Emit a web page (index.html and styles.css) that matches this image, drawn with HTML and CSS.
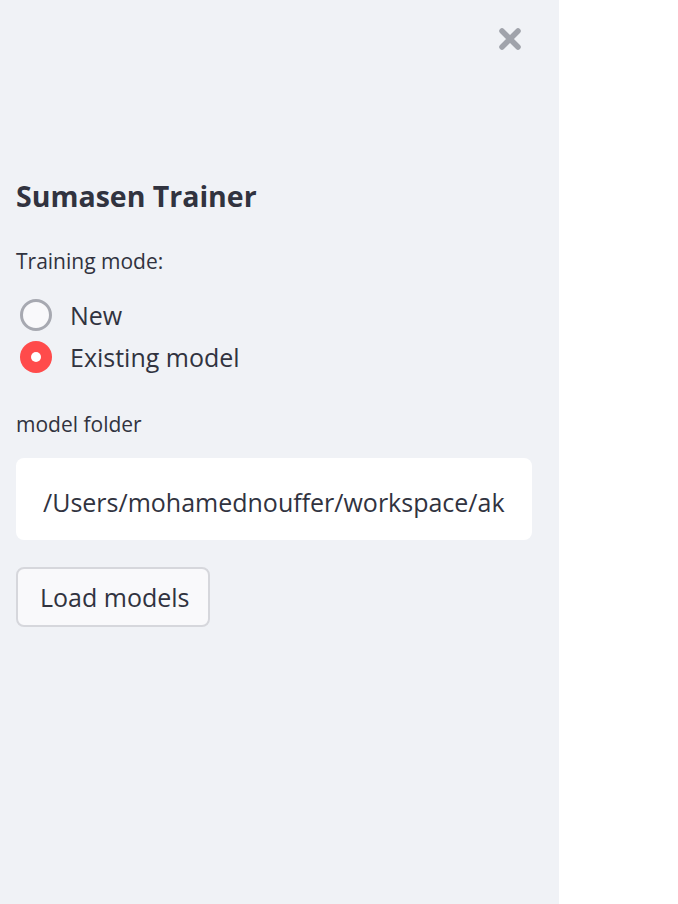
FILE: index.html
```html
<!DOCTYPE html>
<html lang="en">
<head>
<meta charset="utf-8">
<title>Sumasen Trainer</title>
<link rel="stylesheet" href="styles.css">
</head>
<body>
<div class="app">
  <aside class="sidebar">
    <div class="topbar">
      <button class="close" aria-label="Close sidebar">
        <svg width="24" height="24" viewBox="0 0 24 24"><path d="M4 4 L20 20 M20 4 L4 20" stroke="#a0a3ab" stroke-width="5.5" stroke-linecap="round" fill="none"/></svg>
      </button>
    </div>
    <h2 class="title">Sumasen Trainer</h2>
    <div class="field-label">Training mode:</div>
    <div class="radio-group">
      <label class="radio-row"><span class="radio"></span><span class="radio-text">New</span></label>
      <label class="radio-row"><span class="radio checked"></span><span class="radio-text">Existing model</span></label>
    </div>
    <div class="field-label folder-label">model folder</div>
    <input class="text-input" type="text" value="/Users/mohamednouffer/workspace/ak">
    <div class="btn-row"><button class="btn">Load models</button></div>
  </aside>
  <main class="main"></main>
</div>
</body>
</html>
```
FILE: styles.css
```css
html, body {
  margin: 0;
  padding: 0;
  background: #ffffff;
  font-family: "Open Sans", Lato, sans-serif;
  color: #31333f;
}
.app {
  display: flex;
  width: 678px;
  height: 904px;
}
.sidebar {
  width: 559px;
  height: 904px;
  box-sizing: border-box;
  padding: 0 27px 0 16px;
  background: #f0f2f6;
  display: flex;
  flex-direction: column;
}
.main {
  flex: 1;
  background: #ffffff;
}
.topbar {
  display: flex;
  justify-content: flex-end;
  padding-top: 27px;
  margin-right: 10px;
}
.close {
  border: 0;
  padding: 0;
  background: transparent;
  width: 24px;
  height: 24px;
  display: block;
}
.close svg { display: block; }
.title {
  margin: 127px 0 0 0;
  font-size: 28.5px;
  line-height: 36px;
  font-weight: 700;
}
.field-label {
  margin-top: 35px;
  font-size: 21px;
  line-height: 25px;
}
.radio-group {
  margin-top: 20px;
  display: flex;
  flex-direction: column;
}
.radio-row {
  display: flex;
  align-items: center;
  height: 42px;
  padding-left: 4px;
  gap: 18px;
}
.radio {
  width: 32px;
  height: 32px;
  box-sizing: border-box;
  border-radius: 50%;
  border: 3px solid #a7a9b1;
  background: #f9f9fb;
  display: flex;
  align-items: center;
  justify-content: center;
}
.radio.checked {
  border: 0;
  background: #ff4b4b;
}
.radio.checked::after {
  content: "";
  width: 10px;
  height: 10px;
  border-radius: 50%;
  background: #ffffff;
}
.radio-text {
  font-size: 25px;
  line-height: 29px;
}
.folder-label {
  margin-top: 34px;
}
.text-input {
  margin-top: 21px;
  width: 100%;
  height: 82px;
  box-sizing: border-box;
  border: 0;
  border-radius: 8px;
  background: #ffffff;
  padding: 6px 8px 0 27px;
  font-family: inherit;
  font-size: 25px;
  color: #31333f;
  outline: none;
}
.btn-row {
  margin-top: 27px;
  display: flex;
}
.btn {
  height: 60px;
  box-sizing: border-box;
  padding: 0 18px 0 22px;
  border: 2px solid #d6d7dc;
  border-radius: 8px;
  background: #f9f9fb;
  font-family: inherit;
  font-size: 25px;
  color: #31333f;
}
```
